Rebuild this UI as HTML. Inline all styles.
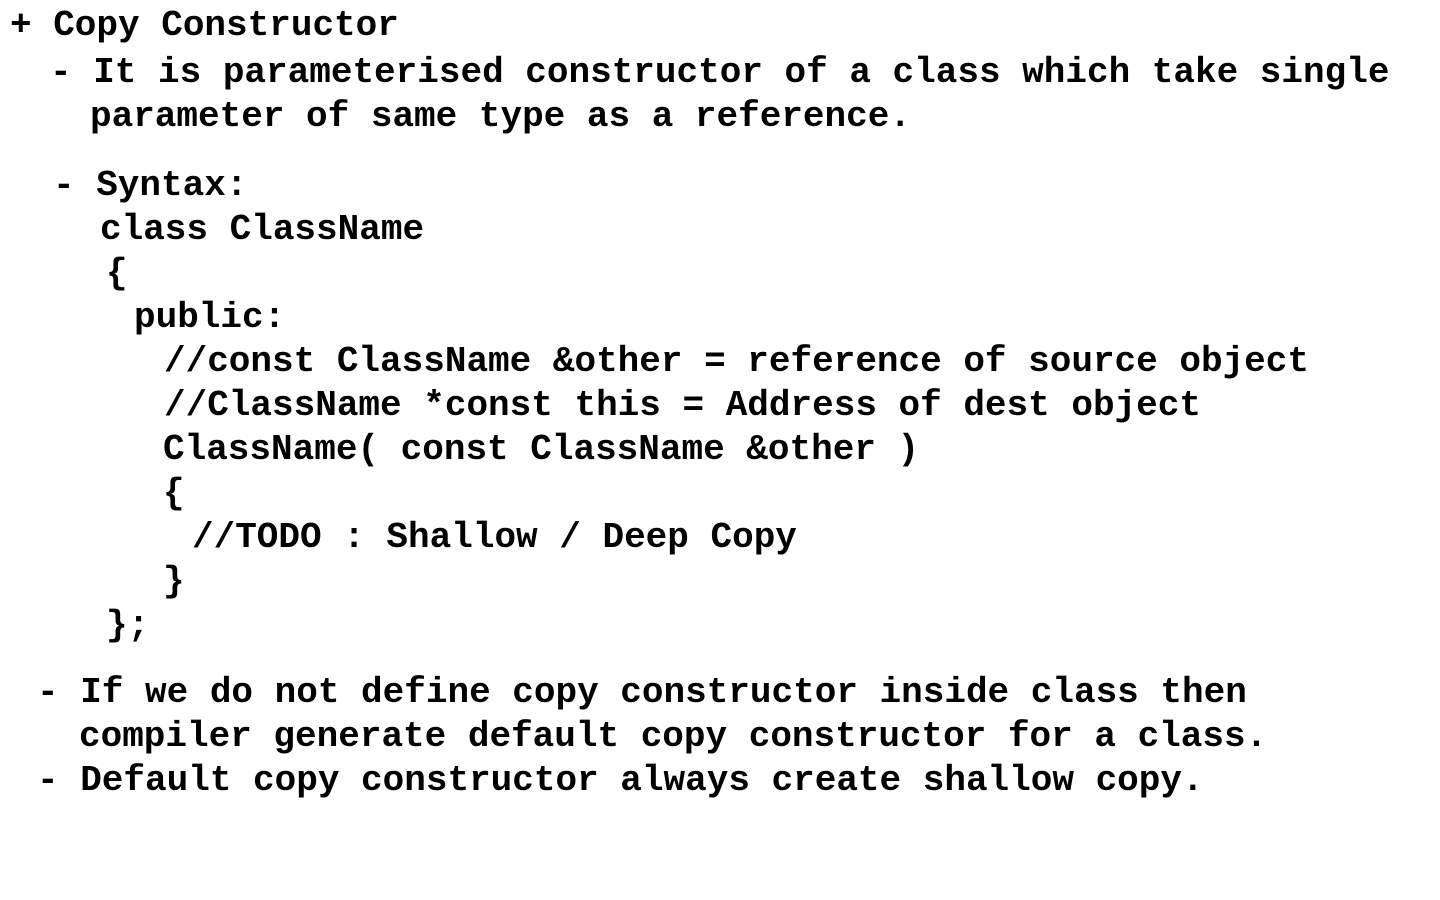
<!DOCTYPE html>
<html><head><meta charset="utf-8"><style>
html,body{margin:0;padding:0;background:#fff;width:1440px;height:900px;overflow:hidden}
div{position:absolute;white-space:pre;font-family:"Liberation Mono","Courier New",monospace;font-weight:bold;font-size:36px;line-height:44px;color:#000}
</style></head><body>
<div style="left:10px;top:4px">+ Copy Constructor</div>
<div style="left:50px;top:51px">- It is parameterised constructor of a class which take single</div>
<div style="left:90px;top:95px">parameter of same type as a reference.</div>
<div style="left:53px;top:164px">- Syntax:</div>
<div style="left:100px;top:208px">class ClassName</div>
<div style="left:106px;top:252px">{</div>
<div style="left:134px;top:296px">public:</div>
<div style="left:164px;top:340px">//const ClassName &amp;other = reference of source object</div>
<div style="left:164px;top:384px">//ClassName *const this = Address of dest object</div>
<div style="left:163px;top:428px">ClassName( const ClassName &amp;other )</div>
<div style="left:163px;top:472px">{</div>
<div style="left:192px;top:516px">//TODO : Shallow / Deep Copy</div>
<div style="left:163px;top:560px">}</div>
<div style="left:106px;top:604px">};</div>
<div style="left:37px;top:671px">- If we do not define copy constructor inside class then</div>
<div style="left:79px;top:715px">compiler generate default copy constructor for a class.</div>
<div style="left:37px;top:759px">- Default copy constructor always create shallow copy.</div>
</body></html>
